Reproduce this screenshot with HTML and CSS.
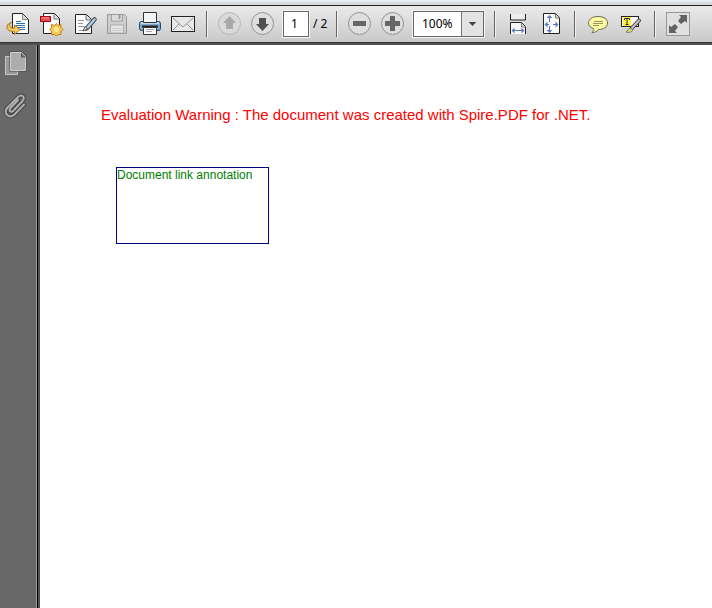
FILE: index.html
```
<!DOCTYPE html>
<html lang="en">
<head>
<meta charset="utf-8">
<title>Document viewer</title>
<link rel="stylesheet" href="styles.css">
</head>
<body>
<header class="toolbar">
  <button class="tool" aria-label="Open"><svg viewBox="1 9 33 30">
    <path d="M12.500 13.500h10l6 6v14h-16z" fill="#fcfcfc" stroke="#222"/><path d="M22.500 14v5.500h5.500" fill="#ddd" stroke="#888"/>
    <path d="M16 21.500h5M16 23.500h9M16 25.500h9M18 27.500h7M20 29.500h5" stroke="#2d6fbd"/>
    <path d="M11.500 22.500c-5 1-6 6-2.500 8 2 1 4 1 5.500.8v3.200l5.500-5-5.500-4.500v3c-3 .5-5-.5-5-2.500 0-1 .8-2 2-3z" fill="#f4cb5c" stroke="#a8751a"/>
  </svg></button>
  <button class="tool" aria-label="Create PDF"><svg viewBox="34 9 33 30">
    <path d="M43.500 13.500h11l5 5v15h-16z" fill="#fafafa" stroke="#222"/><path d="M54 14v5h5" fill="#ddd" stroke="#777"/>
    <rect x="40.500" y="16.500" width="10" height="5" fill="#e44b50" stroke="#a80c18"/><path d="M42 18h7" stroke="#f49a98"/>
    <path d="M56.500 23.500l1.500 2 3-1v3l2 2-2 2v3h-3l-1.500 1.500-2-1.500h-3v-3l-1.500-2 1.500-2v-3l3 1z" fill="#f3ca57" stroke="#bf7b16"/><circle cx="56.500" cy="29.500" r="2.500" fill="#ffe797"/>
  </svg></button>
  <button class="tool" aria-label="Sign"><svg viewBox="67 9 33 30">
    <path d="M75.500 14.500h11l5 5v14h-16z" fill="#fbfbfb" stroke="#222"/><path d="M86 15v5h5" fill="#ddd" stroke="#777"/>
    <path d="M78 20.500h6M78 23.500h5M78 26.500h6M79 30.500h8" stroke="#999"/>
    <path d="M94.500 19.500L87 28" stroke="#3d505f" stroke-width="4.500" stroke-linecap="round"/><path d="M94.500 19.500L87 28" stroke="#b4cddd" stroke-width="2.500" stroke-linecap="round"/><path d="M85 26.500l3 2.500-5 2z" fill="#ddd" stroke="#555"/>
  </svg></button>
  <button class="tool" aria-label="Save" disabled><svg viewBox="100 9 33 30">
    <path d="M107.500 14.500h17l2 2v17h-19z" fill="#cdcdcd" stroke="#999"/><path d="M111.500 15v6h11v-6" fill="#ddd" stroke="#a0a0a0"/><path d="M119.500 15v4" stroke="#999" stroke-width="2"/>
    <path d="M110.500 33v-8h13v8z" fill="#e7e7e7" stroke="#aaa"/><path d="M112 28.500h10M112 30.500h10" stroke="#ccc"/>
  </svg></button>
  <button class="tool" aria-label="Print"><svg viewBox="133 9 33 30">
    <rect x="139.500" y="21.500" width="21" height="9" rx="2" fill="#80a9cf" stroke="#244766"/><path d="M141 23h18" stroke="#c1d9eb" stroke-width="2"/>
    <path d="M143.500 12.500h13v10h-13z" fill="#f5f5f5" stroke="#333"/><path d="M142 26.500h16" stroke="#222" stroke-width="2"/>
    <path d="M143.500 27.500h13v7h-13z" fill="#fafafa" stroke="#333"/><path d="M146 29.500h8M146 31.500h6" stroke="#aaa"/>
  </svg></button>
  <button class="tool" aria-label="Email"><svg viewBox="166 9 33 30">
    <rect x="171.500" y="16.500" width="23" height="15" fill="#e8e8e8" stroke="#222"/><path d="M173 18l10 9 10-9M173 30l6-6M193 30l-6-6" fill="none" stroke="#909090"/>
  </svg></button>
  <span class="rule"></span>
  <button class="tool" aria-label="Previous page" disabled><svg viewBox="213 9 33 30">
    <circle cx="229.500" cy="23.500" r="11" fill="#dadada" stroke="#b7b7b7"/><path d="M229.500 16l6.500 7h-3v6h-7v-6h-3z" fill="#a9a9a9"/>
  </svg></button>
  <button class="tool" aria-label="Next page"><svg viewBox="246 9 33 30">
    <circle cx="262.500" cy="23.500" r="11" fill="#dedede" stroke="#929292"/><path d="M262.500 31l6.500-7h-3v-6h-7v6h-3z" fill="#505050"/>
  </svg></button>
  <input class="page-number" type="text" value="1" aria-label="Page number">
  <span class="page-total">/ 2</span>
  <span class="rule"></span>
  <button class="tool" aria-label="Zoom out"><svg viewBox="343 9 33 30">
    <circle cx="359.500" cy="23.500" r="11" fill="#dedede" stroke="#929292"/><path d="M353 21h13v5h-13z" fill="#666"/>
  </svg></button>
  <button class="tool" aria-label="Zoom in"><svg viewBox="376 9 33 30">
    <circle cx="392.500" cy="23.500" r="11" fill="#dedede" stroke="#929292"/><path d="M385 21h5v-5h5v5h5v5h-5v5h-5v-5h-5z" fill="#666"/>
  </svg></button>
  <span class="zoom">
    <select class="zoom-value" aria-label="Zoom level"><option>100%</option></select>
    <svg class="zoom-arrow" viewBox="0 0 22 24"><path d="M7 10h8l-4 4z" fill="#444"/></svg>
  </span>
  <span class="rule"></span>
  <button class="tool" aria-label="Fit width"><svg viewBox="501 9 33 30">
    <path d="M510.500 14v6h15v-6" fill="#eee" stroke="#222"/><path d="M510.500 34V22.500h11l4 4V34" fill="#f7f7f7" stroke="#222"/><path d="M521.500 23v4h4" fill="#ddd" stroke="#777"/>
    <path d="M512 30.500h12" stroke="#4f70b5"/><path d="M514.500 27.500v6l-3-3zM521.500 27.500v6l3-3z" fill="#5f7fc0"/>
  </svg></button>
  <button class="tool" aria-label="Fit page"><svg viewBox="534 9 33 30">
    <path d="M543.500 13.500h12l4 4v16h-16z" fill="#fafafa" stroke="#222"/><path d="M555.500 14v4h4" fill="#ddd" stroke="#777"/>
    <path d="M545 24.500h4M553 24.500h4M549.500 16v6M549.500 26v6" stroke="#4f70b5"/><path d="M547.500 21.500v6l-3-3zM555.500 21.500v6l3-3zM546.500 18h6l-3-3zM546.500 30h6l-3 3z" fill="#5f7fc0"/>
  </svg></button>
  <span class="rule"></span>
  <button class="tool" aria-label="Comment"><svg viewBox="581 9 33 30">
    <path d="M598 16.500c6 0 9.500 2.500 9.500 6.500s-4 6.500-9 6.500c-1.500 2-3.500 3-6.500 3 1.500-1.500 2-3 1.500-4-3.500-1-5-3-5-5.500 0-4 4-6.500 9.500-6.500z" fill="#fffba5" stroke="#6c6a50"/>
    <path d="M594 21.500h9M593 23.500h10M593 25.500h6" stroke="#99945d"/>
  </svg></button>
  <button class="tool" aria-label="Highlight text"><svg viewBox="614 9 33 30">
    <rect x="621.500" y="16.500" width="17" height="10" fill="#fafafa" stroke="#222"/><path d="M623 17h8v9h-8z" fill="#fff340"/>
    <path d="M624.500 20v-1.500h5V20M627 19v6M625.500 24.500h3" fill="none" stroke="#333"/>
    <path d="M639 20.500l-7 7.500" stroke="#444" stroke-width="4" stroke-linecap="round"/><path d="M639 20.500l-7 7.500" stroke="#c4c4c4" stroke-width="2" stroke-linecap="round"/><path d="M630 28l3 2c-1 2-4 3-7 2 2-1 2-3 4-4z" fill="#e9dc65" stroke="#777"/>
  </svg></button>
  <span class="rule"></span>
  <button class="tool" aria-label="Full screen"><svg viewBox="661 9 33 30">
    <rect x="666.500" y="12.500" width="23" height="23" fill="#e0e0e0" stroke="#989898"/>
    <path d="M679 15h8v8l-2-2-4 3-3-3 3-4zM669 25l2 2 4-3 3 3-3 4 2 2h-8z" fill="#626262"/>
  </svg></button>
</header>
<div class="workspace">
  <nav class="sidebar" aria-label="Panels">
    <button class="panel" aria-label="Pages"><svg viewBox="0 48 33 32">
      <path d="M5.500 56.500h12v18h-12z" fill="#999" stroke="#c4c4c4"/><path d="M10.500 52.500h11l4 4v14h-15z" fill="#ababab" stroke="#444" stroke-width="2"/><path d="M10.500 52.500h11l4 4v14h-15z" fill="#acacac" stroke="#cecece"/><path d="M21.500 53v4h4" fill="#777" stroke="#555"/>
    </svg></button>
    <button class="panel" aria-label="Attachments"><svg viewBox="0 90 33 32">
      <g fill="none" stroke-linecap="round">
        <path d="M18 100l-7.500 8c-2.500 3 .5 5 3 2.500l9-9.500c3.500-4.500-1-7-4.500-4L7.500 107.500c-4.500 5.500 1 12 7 7l9.500-10" stroke="#454545" stroke-width="4"/>
        <path d="M18 100l-7.500 8c-2.500 3 .5 5 3 2.500l9-9.500c3.500-4.500-1-7-4.500-4L7.500 107.500c-4.500 5.500 1 12 7 7l9.500-10" stroke="#b0b0b0" stroke-width="2"/>
      </g>
    </svg></button>
  </nav>
  <main class="page">
    <p class="warning">Evaluation Warning : The document was created with Spire.PDF for .NET.</p>
    <a class="annotation" href="#">Document link annotation</a>
  </main>
</div>
</body>
</html>
```
FILE: styles.css
```
* { box-sizing: border-box; }

body {
  margin: 0;
  min-height: 100vh;
  display: flex;
  flex-direction: column;
  font-family: "Liberation Sans", Arial, sans-serif;
}

button {
  border: 0;
  padding: 0;
  background: none;
}

svg { display: block; }

.toolbar {
  display: flex;
  align-items: center;
  height: 43px;
  padding: 5px 0 1px 1px;
  background:
    linear-gradient(#e8eef4, #e8eef4) 0 0 / 100% 2px no-repeat,
    linear-gradient(#d7dade, #d7dade) 0 2px / 100% 3px no-repeat,
    linear-gradient(#222, #222) 0 5px / 100% 1px no-repeat,
    linear-gradient(#333, #333) 0 100% / 100% 1px no-repeat,
    linear-gradient(#f0f0f0, #c8c8c8);
  font: 12px/16px "Noto Sans", sans-serif;
}

.tool {
  flex: none;
  width: 33px;
  height: 30px;
}

.rule {
  flex: none;
  width: 2px;
  height: 26px;
  margin: 0 5px 0 7px;
  border-left: 1px solid #666;
  border-right: 1px solid #f2f2f2;
}

.page-number {
  flex: none;
  width: 26px;
  height: 26px;
  margin-left: 4px;
  padding: 0 0 0 7px;
  border: 1px solid #666;
  outline: 1px solid #f6f6f6;
  background: #fff;
  font: inherit;
}

.page-total {
  flex: none;
  width: 20px;
  padding-left: 4px;
  white-space: nowrap;
}

.zoom {
  display: grid;
  grid-template-columns: 47px 22px;
  flex: none;
  width: 71px;
  height: 26px;
  margin: 0 3px 0 4px;
  border: 1px solid #666;
  outline: 1px solid #f6f6f6;
  background: #e3e3e3;
}

.zoom-value {
  appearance: none;
  grid-area: 1 / 1 / 2 / 3;
  padding: 0 0 0 8px;
  border: 0;
  border-radius: 0;
  background: linear-gradient(#fff, #fff) 0 0 / 47px 100% no-repeat;
  color: #000;
  font: inherit;
}

.zoom-arrow {
  grid-area: 1 / 2;
  width: 22px;
  height: 24px;
  border-left: 1px solid #777;
  pointer-events: none;
}

.workspace {
  display: flex;
  flex: 1;
  border-top: 2px solid #505050;
}

.sidebar {
  flex: none;
  display: flex;
  flex-direction: column;
  gap: 10px;
  width: 37px;
  padding-top: 3px;
  border-right: 1px solid #999;
  background: #686868;
}

.panel {
  width: 33px;
  height: 32px;
}

.page {
  flex: 1;
  padding: 60px 20px 20px 61px;
  border-left: 1px solid #000;
  box-shadow: inset 2px 0 #505050;
  background: #fff;
}

.warning {
  margin: 0 0 42px 2px;
  color: #f00;
  font-size: 15px;
  line-height: 20px;
}

.annotation {
  display: block;
  width: 153px;
  height: 77px;
  margin-left: 17px;
  border: 1px solid #000080;
  color: #008000;
  font-size: 12px;
  line-height: 14px;
  text-decoration: none;
  white-space: nowrap;
}
```
